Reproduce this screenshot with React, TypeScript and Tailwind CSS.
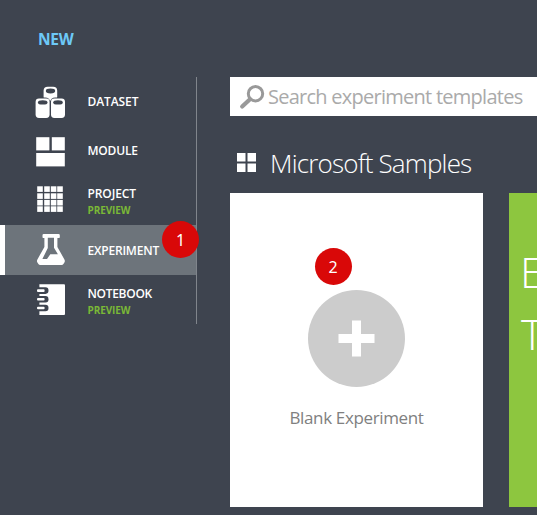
import type { ReactNode } from "react";

function DatasetIcon() {
  return (
    <svg width="50" height="50" viewBox="0 0 50 50" fill="#fff">
      <rect x="18.6" y="9.8" width="13.6" height="14" rx="4" />
      <ellipse cx="25.5" cy="14" rx="4.7" ry="2.4" fill="#3e444f" />
      <rect x="9.8" y="20.4" width="15.4" height="21" rx="5" fill="#3e444f" />
      <rect x="25.2" y="20.4" width="15.4" height="21" rx="5" fill="#3e444f" />
      <rect x="10.6" y="21.4" width="14" height="19.6" rx="3.4" />
      <rect x="26" y="21.4" width="14" height="19.6" rx="3.4" />
      <ellipse cx="17.7" cy="25.4" rx="4.8" ry="2.2" fill="#3e444f" />
      <ellipse cx="33" cy="25.4" rx="4.8" ry="2.2" fill="#3e444f" />
    </svg>
  );
}

function ModuleIcon() {
  return (
    <svg width="50" height="50" viewBox="0 0 50 50" fill="#fff">
      <rect x="11.2" y="11.2" width="13.2" height="13.2" />
      <rect x="26.8" y="11.2" width="13" height="13.2" />
      <rect x="11.2" y="27" width="28.6" height="13.4" />
    </svg>
  );
}

function ProjectIcon() {
  const starts = [12.2, 19.2, 25.8, 32.2];
  return (
    <svg width="50" height="50" viewBox="0 0 50 50" fill="#fff">
      {starts.map((y) =>
        starts.map((x) => <rect key={`${x}-${y}`} x={x} y={y - 0.9} width="5.6" height="5.6" />),
      )}
    </svg>
  );
}

function ExperimentIcon() {
  return (
    <svg width="50" height="50" viewBox="0 0 50 50">
      <path
        d="M18.700 9h14.900q1.200 0 1.200 1.200v1.700q0 1.200-1.200 1.200h-1.200v8.900l7 12.400q.9 1.600 0 3l-1 1.600q-.6.900-1.800.9H15.200q-1.200 0-1.800-.9l-1-1.600q-.9-1.400 0-3l7-12.400v-8.900h-.7q-1.200 0-1.200-1.200v-1.700q0-1.200 1.200-1.200Z"
        fill="#fff"
      />
      <path d="M22.800 12.800h6.200v9.900l3.900 6.600h-7.600l-3.300 4.800h-4.600l5.400-11.200Z" fill="#6d747b" />
    </svg>
  );
}

function NotebookIcon() {
  return (
    <svg width="50" height="50" viewBox="0 0 50 50">
      <path d="M14.400 9.300h24.600q1 0 1 1v28.600q0 1-1 1H14.400Z" fill="#fff" />
      {[15.6, 24.3, 33].map((y) => (
        <g key={y}>
          <path d={`M12 ${y - 3.3}h8.500q3 0 3 3.300t-3 3.300H12Z`} fill="#3e444f" />
          <rect x="12" y={y - 1.3} width="7.600" height="2.600" rx="1" fill="#fff" />
        </g>
      ))}
    </svg>
  );
}

interface ItemProps {
  icon: ReactNode;
  label: string;
  spacing: string;
  preview?: boolean;
  active?: boolean;
  height: string;
}

function MenuItem({ icon, label, spacing, preview, active, height }: ItemProps) {
  return (
    <li
      className={`flex items-center border-l-[5px] ${height} ${
        active ? "border-white bg-[#6d747b]" : "border-transparent"
      }`}
    >
      <span className="ml-5 w-[50px] shrink-0">{icon}</span>
      <span className={`ml-[12.500px] flex flex-col whitespace-nowrap ${preview ? "pt-[4px]" : ""}`}>
        <span className={`text-[12px] leading-[17px] font-semibold text-white ${spacing}`}>{label}</span>
        {preview && (
          <span className="text-[10px] leading-[17px] font-bold tracking-[-0.100px] text-[#7ab837]">PREVIEW</span>
        )}
      </span>
    </li>
  );
}

function Badge({ value, place }: { value: number; place: string }) {
  return (
    <span
      className={`absolute flex size-[37px] items-center justify-center rounded-full bg-[#d90808] font-['Noto_Sans',sans-serif] text-[16px] text-white ${place}`}
    >
      {value}
    </span>
  );
}

export default function App() {
  return (
    <div className="flex h-[515px] w-[537px] overflow-hidden bg-[#3e444f] font-['Open_Sans','Noto_Sans',sans-serif]">
      <aside className="w-[197px] shrink-0">
        <h1 className="h-[77px] pt-[28px] pl-[38px] text-[15.500px] leading-[22px] font-bold tracking-[-0.300px] text-[#6dc9f7]">
          NEW
        </h1>
        <nav className="relative h-[247px] border-r border-[#80858c]">
          <ul>
            <MenuItem icon={<DatasetIcon />} label="DATASET" spacing="tracking-[-0.100px]" height="h-[49px]" />
            <MenuItem icon={<ModuleIcon />} label="MODULE" spacing="tracking-[-0.200px]" height="h-[49px]" />
            <MenuItem icon={<ProjectIcon />} label="PROJECT" spacing="tracking-[-0.100px]" height="h-[50px]" preview />
            <MenuItem icon={<ExperimentIcon />} label="EXPERIMENT" spacing="tracking-[-0.200px]" height="h-[50px]" active />
            <MenuItem icon={<NotebookIcon />} label="NOTEBOOK" spacing="tracking-[-0.300px]" height="h-[49px]" preview />
          </ul>
          <Badge value={1} place="top-[144px] left-[162px]" />
        </nav>
      </aside>

      <main className="ml-[33px] w-[307px] shrink-0 pt-[77px]">
        <div className="flex h-[39px] items-center bg-white pl-[9px]">
          <svg width="26" height="27" viewBox="0 0 26 27" fill="none" stroke="#999">
            <circle cx="16.500" cy="10.700" r="7.200" strokeWidth="3" />
            <path d="M11 16.200 3.200 23.500" strokeWidth="4.200" strokeLinecap="round" />
          </svg>
          <span className="ml-[3px] text-[20px] leading-[28px] tracking-[-0.740px] whitespace-nowrap text-[#aaa]">
            Search experiment templates
          </span>
        </div>

        <div className="flex h-[77px] items-center pl-[7px]">
          <svg className="mt-[16px]" width="19" height="19" viewBox="0 0 19 19" fill="#fff">
            <rect x="0" y="0" width="8.500" height="8.500" />
            <rect x="10.500" y="0" width="8.500" height="8.500" />
            <rect x="0" y="10.500" width="8.500" height="8.500" />
            <rect x="10.500" y="10.500" width="8.500" height="8.500" />
          </svg>
          <h2 className="mt-[16px] ml-[14px] text-[26px] leading-[36px] font-light tracking-[-0.820px] whitespace-nowrap text-white">
            Microsoft Samples
          </h2>
        </div>

        <div className="flex gap-[26px]">
          <section className="relative flex h-[314px] w-[253px] shrink-0 flex-col items-center bg-white pt-[97px] pr-px">
            <div className="flex size-[97px] items-center justify-center rounded-full bg-[#ccc]">
              <svg width="37" height="37" viewBox="0 0 37 37" fill="#fff">
                <path d="M14 .5h9V14h13.500v9H23v13.500h-9V23H.5v-9H14Z" />
              </svg>
            </div>
            <p className="mt-[19px] ml-px text-[17px] leading-6 tracking-[-0.350px] whitespace-nowrap text-[#808080]">
              Blank Experiment
            </p>
            <Badge value={2} place="top-[55px] left-[84.500px]" />
          </section>
          <section className="h-[314px] w-7 shrink-0 overflow-hidden bg-[#8dc63f] pt-[48px] pl-[11px] text-[43px] leading-[62px] font-light text-white">
            <div>E</div>
            <div className="pl-px">T</div>
          </section>
        </div>
      </main>
    </div>
  );
}
